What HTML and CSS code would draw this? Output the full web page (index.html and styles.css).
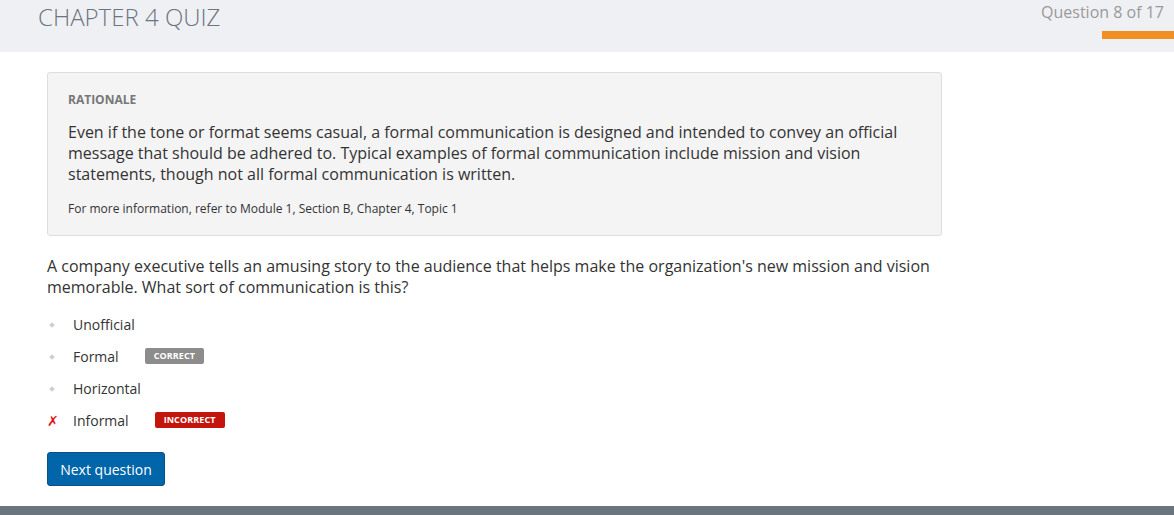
FILE: index.html
```html
<!DOCTYPE html>
<html lang="en">
<head>
<meta charset="utf-8">
<title>Chapter 4 Quiz</title>
<link rel="stylesheet" href="styles.css">
</head>
<body>
<header class="topbar">
  <h1 class="quiz-title">CHAPTER 4 QUIZ</h1>
  <div class="progress">
    <div class="progress-label">Question 8 of 17</div>
    <div class="progress-bar"></div>
  </div>
</header>
<main class="content">
  <section class="rationale">
    <h2 class="rationale-title">RATIONALE</h2>
    <p class="rationale-text">Even if the tone or format seems casual, a formal communication is designed and intended to convey an official message that should be adhered to. Typical examples of formal communication include mission and vision statements, though not all formal communication is written.</p>
    <p class="rationale-ref">For more information, refer to Module 1, Section B, Chapter 4, Topic 1</p>
  </section>
  <p class="question">A company executive tells an amusing story to the audience that helps make the organization's new mission and vision memorable. What sort of communication is this?</p>
  <ul class="options">
    <li class="option"><span class="marker"><span class="dot"></span></span><span class="label">Unofficial</span></li>
    <li class="option"><span class="marker"><span class="dot"></span></span><span class="label">Formal</span><span class="badge badge-correct">CORRECT</span></li>
    <li class="option"><span class="marker"><span class="dot"></span></span><span class="label">Horizontal</span></li>
    <li class="option"><span class="marker"><span class="cross">&#x2717;</span></span><span class="label">Informal</span><span class="badge badge-incorrect">INCORRECT</span></li>
  </ul>
  <button class="next-btn" type="button">Next question</button>
</main>
<footer class="footer"></footer>
</body>
</html>
```
FILE: styles.css
```css
* { box-sizing: border-box; }
html, body { margin: 0; padding: 0; }
body {
  font-family: "Open Sans", "Liberation Sans", sans-serif;
  color: #333;
  background: #fff;
  overflow: hidden;
  height: 515px;
}
.topbar {
  height: 52px;
  background: #eff0f4;
  display: flex;
  justify-content: space-between;
  align-items: flex-start;
}
.quiz-title {
  margin: 1px 0 0 38px;
  font-size: 24px;
  font-weight: 300;
  line-height: 32px;
  color: #6b7480;
  letter-spacing: 0;
}
.progress {
  display: flex;
  flex-direction: column;
  align-items: flex-end;
  padding-top: 1px;
}
.progress-label {
  font-size: 16px;
  line-height: 22px;
  color: #999;
  padding-right: 10px;
}
.progress-bar {
  margin-top: 8px;
  width: 72px;
  height: 8px;
  background: #f18f22;
}
.content {
  padding: 20px 0 0 47px;
  width: 942px;
}
.rationale {
  background: #f4f4f4;
  border: 1px solid #dedede;
  border-radius: 3px;
  padding: 18px 20px 17px 20px;
}
.rationale-title {
  margin: 0;
  font-size: 12px;
  line-height: 18px;
  font-weight: 700;
  color: #777;
}
.rationale-text {
  margin: 13px 0 0 0;
  font-size: 16px;
  line-height: 21px;
}
.rationale-ref {
  margin: 15px 0 0 0;
  font-size: 12px;
  line-height: 18px;
}
.question {
  margin: 20px 0 0 0;
  font-size: 16px;
  line-height: 21px;
}
.options {
  list-style: none;
  margin: 11px 0 0 0;
  padding: 0;
}
.option {
  display: flex;
  align-items: center;
  height: 32px;
  font-size: 14px;
}
.marker {
  width: 26px;
  display: flex;
  align-items: center;
}
.dot {
  width: 4px;
  height: 4px;
  margin-left: 3px;
  background: #cfcfcf;
  transform: rotate(45deg);
}
.cross {
  color: #e0141c;
  font-family: "DejaVu Sans", sans-serif;
  font-size: 14px;
  font-weight: 700;
  font-style: italic;
  line-height: 1;
}
.label { line-height: 32px; }
.badge {
  margin-left: 26px;
  margin-top: -2px;
  height: 16px;
  padding: 0 9px;
  border-radius: 2px;
  font-size: 9px;
  font-weight: 700;
  line-height: 16px;
  letter-spacing: 0.1px;
  color: #fff;
}
.badge-correct { background: #8c8c8c; }
.badge-incorrect { background: #c4150c; }
.next-btn {
  margin-top: 15px;
  width: 118px;
  height: 34px;
  background: #0065a9;
  border: 1px solid #0b4f84;
  border-radius: 3px;
  color: #fff;
  font-family: "Open Sans", "Liberation Sans", sans-serif;
  font-size: 14px;
  padding: 0;
}
.footer {
  margin-top: 20px;
  height: 40px;
  background: #6b757e;
}
```
